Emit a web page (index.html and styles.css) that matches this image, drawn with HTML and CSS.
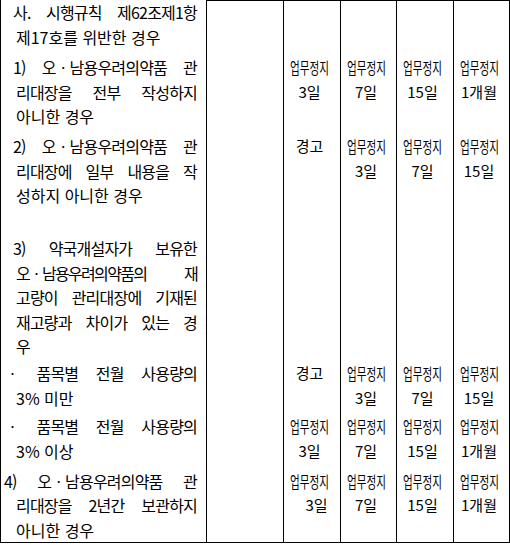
FILE: index.html
```html
<!DOCTYPE html>
<html lang="ko">
<head>
<meta charset="utf-8">
<link rel="stylesheet" href="styles.css">
</head>
<body>
<div class="tbl">
  <!-- row 1 -->
  <div class="c left r1">
    <div class="j in3">사. 시행규칙 제62조제1항</div>
    <div class="e">제17호를 위반한 경우</div>
  </div>
  <div class="c top r1"></div>
  <div class="c top r1"></div>
  <div class="c top r1"></div>
  <div class="c top r1"></div>
  <div class="c top r1"></div>

  <!-- row 2 -->
  <div class="c left r2">
    <div class="j in3">1) 오ㆍ남용우려의약품 관</div>
    <div class="j">리대장을 전부 작성하지</div>
    <div class="e">아니한 경우</div>
  </div>
  <div class="c r2"></div>
  <div class="c pen r2"><span class="cond">업무정지</span><br>3일</div>
  <div class="c pen r2"><span class="cond">업무정지</span><br>7일</div>
  <div class="c pen r2"><span class="cond">업무정지</span><br>15일</div>
  <div class="c pen r2"><span class="cond">업무정지</span><br>1개월</div>

  <!-- row 3 -->
  <div class="c left r3">
    <div class="j in3">2) 오ㆍ남용우려의약품 관</div>
    <div class="j">리대장에 일부 내용을 작</div>
    <div class="e">성하지 아니한 경우</div>
  </div>
  <div class="c r3"></div>
  <div class="c pen r3">경고</div>
  <div class="c pen r3"><span class="cond">업무정지</span><br>3일</div>
  <div class="c pen r3"><span class="cond">업무정지</span><br>7일</div>
  <div class="c pen r3"><span class="cond">업무정지</span><br>15일</div>

  <!-- row 4 -->
  <div class="c left r4">
    <div class="e">&nbsp;</div>
    <div class="j in3 gap">3) 약국개설자가 보유한</div>
    <div class="j tight">오ㆍ남용우려의약품의 재</div>
    <div class="j">고량이 관리대장에 기재된</div>
    <div class="j">재고량과 차이가 있는 경</div>
    <div class="e">우</div>
  </div>
  <div class="c r4"></div>
  <div class="c r4"></div>
  <div class="c r4"></div>
  <div class="c r4"></div>
  <div class="c r4"></div>

  <!-- row 5 -->
  <div class="c left r5">
    <div class="j dot">ㆍ 품목별 전월 사용량의</div>
    <div class="e">3% 미만</div>
  </div>
  <div class="c r5"></div>
  <div class="c pen r5">경고</div>
  <div class="c pen r5"><span class="cond">업무정지</span><br>3일</div>
  <div class="c pen r5"><span class="cond">업무정지</span><br>7일</div>
  <div class="c pen r5"><span class="cond">업무정지</span><br>15일</div>

  <!-- row 6 -->
  <div class="c left r6">
    <div class="j dot">ㆍ 품목별 전월 사용량의</div>
    <div class="e">3% 이상</div>
  </div>
  <div class="c r6"></div>
  <div class="c pen r6"><span class="cond">업무정지</span><br>3일</div>
  <div class="c pen r6"><span class="cond">업무정지</span><br>7일</div>
  <div class="c pen r6"><span class="cond">업무정지</span><br>15일</div>
  <div class="c pen r6"><span class="cond">업무정지</span><br>1개월</div>

  <!-- row 7 -->
  <div class="c left r7">
    <div class="j in12">4) 오ㆍ남용우려의약품 관</div>
    <div class="j">리대장을 2년간 보관하지</div>
    <div class="e">아니한 경우</div>
  </div>
  <div class="c r7"></div>
  <div class="c pen r7"><span class="cond">업무정지</span><br><span class="shift">3일</span></div>
  <div class="c pen r7"><span class="cond">업무정지</span><br>7일</div>
  <div class="c pen r7"><span class="cond">업무정지</span><br>15일</div>
  <div class="c pen r7"><span class="cond">업무정지</span><br>1개월</div>
</div>
</body>
</html>
```

FILE: styles.css
```css
html, body {
  margin: 0;
  padding: 0;
  background: #fff;
}

body {
  font-family: "Noto Sans CJK KR", "Noto Sans", sans-serif;
  font-size: 15px;
  line-height: 24.5px;
  color: #000;
}

.tbl {
  display: grid;
  grid-template-columns: 206px 77px 57px 56px 57px 56px;
  width: 510px;
  box-sizing: border-box;
  border-left: 1px solid #000;
  border-bottom: 1px solid #000;
}

.c {
  box-sizing: border-box;
  border-right: 1px solid #000;
}

.top {
  border-top: 1px solid #000;
}

.left {
  padding-left: 15px;
  padding-right: 9px;
  font-size: 16px;
}

.j {
  white-space: nowrap;
  text-align: justify;
  text-align-last: justify;
  letter-spacing: -0.8px;
}

.tight {
  letter-spacing: -1.7px;
}

.e {
  white-space: nowrap;
  text-align: left;
}

.in3 { margin-left: -3px; }
.in12 { margin-left: -12px; }
.dot { margin-left: -11px; }
.gap { margin-top: 1.5px; }

.pen {
  text-align: center;
  padding-right: 5px;
  white-space: nowrap;
}

.cond {
  display: inline-block;
  vertical-align: top;
  font-size: 16px;
  transform: scaleX(0.66);
  margin: 0 -11px;
}

.shift {
  padding-left: 14px;
}

.r1 { padding-top: 0; }
.r2 { padding-top: 6px; }
.r3 { padding-top: 5.5px; }
.r4 { padding-top: 2.5px; }
.r5 { padding-top: 2.5px; }
.r6 { padding-top: 4px; }
.r7 { padding-top: 5.5px; }
```
